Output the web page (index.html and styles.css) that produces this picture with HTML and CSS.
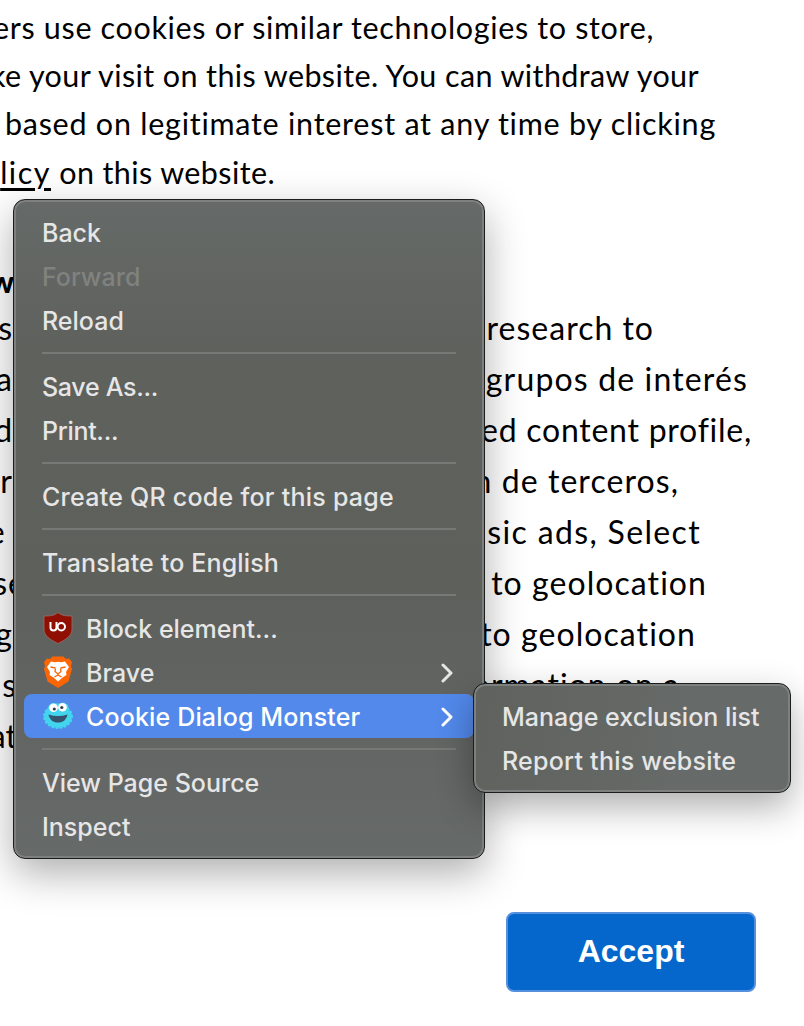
FILE: index.html
```
<!DOCTYPE html>
<html lang="en">
<head>
<meta charset="utf-8">
<title>Cookie dialog</title>
<link rel="stylesheet" href="styles.css">
</head>
<body>
<main class="page">
  <div class="intro">
    <p class="line l1">ers use cookies or similar technologies to store,</p>
    <p class="line l2">ke your visit on this website. You can withdraw your</p>
    <p class="line l3">based on legitimate interest at any time by clicking</p>
    <p class="line l4"><a class="policy">licy</a> on this website.</p>
  </div>
  <div class="purposes">
    <h2 class="heading">w</h2>
    <div class="row r1"><span class="start">s</span><span class="end">research to</span></div>
    <div class="row r2"><span class="start">a</span><span class="end">grupos de interés</span></div>
    <div class="row r3"><span class="start">d</span><span class="end">ed content profile,</span></div>
    <div class="row r4"><span class="start">r</span><span class="end">n de terceros,</span></div>
    <div class="row r5"><span class="start">e</span><span class="end">asic ads, Select</span></div>
    <div class="row r6"><span class="start">se</span><span class="end">to geolocation</span></div>
    <div class="row r7"><span class="start">g</span><span class="end">to geolocation</span></div>
    <div class="row r8"><span class="start">s</span><span class="end">ormation on a</span></div>
    <div class="row r9"><span class="start">at</span></div>
  </div>
  <button class="accept">Accept</button>
</main>

<nav class="menu main-menu">
  <div class="item">Back</div>
  <div class="item disabled">Forward</div>
  <div class="item">Reload</div>
  <div class="sep"></div>
  <div class="item tight">Save As...</div>
  <div class="item tight">Print...</div>
  <div class="sep"></div>
  <div class="item loose">Create QR code for this page</div>
  <div class="sep"></div>
  <div class="item wide">Translate to English</div>
  <div class="sep"></div>
  <div class="item">
    <svg class="icon" viewBox="0 0 32 32">
      <path d="M16 .5C20 4 25 4 30 4v13c0 7-6 10.500-14 14.500C8 27.500 2 24 2 17V4c5 0 10 0 14-3.500z" fill="#8f1003" stroke="#99706b" stroke-width=".8"/>
      <path d="M8.500 10v5.500a3 3 0 0 0 6 0V10v5.500" fill="none" stroke="#fff" stroke-width="2"/>
      <circle cx="19.300" cy="14.800" r="3.700" fill="none" stroke="#fff" stroke-width="2"/>
    </svg>Block element...</div>
  <div class="item">
    <svg class="icon" viewBox="0 0 32 32">
      <path d="M10.500.5h11L24 3l3-.5L30 6l-1 4 1 3-3.500 12.500L16 32 5.500 25.500 2 13l1-3-1-4 3-3.500 3 .5z" fill="#fb6505"/>
      <path d="M9 5.500l4 .8 3-.5 3 .5 4-.8 4 5.500-3 5 .5 3-4 2.500-4.500 4-4.500-4-4-2.500.5-3-3-5z" fill="#fff"/>
      <path d="M8.500 11l5 1M23.500 11l-5 1M13.500 12.500l-.5 3 3 2.500 3-2.500-.5-3M12.500 21l3.500-2 3.500 2" fill="none" stroke="#fb6505" stroke-width="1.300"/>
    </svg>Brave<svg class="chevron" viewBox="0 0 12 20"><path d="M2 2l8 8-8 8"/></svg></div>
  <div class="item active wide">
    <svg class="icon" viewBox="0 0 32 32">
      <ellipse cx="16" cy="16.500" rx="13.500" ry="11" fill="#42d5ee"/>
      <ellipse cx="16" cy="16.500" rx="13.500" ry="11" fill="none" stroke="#42d5ee" stroke-width="3" stroke-linecap="round" stroke-dasharray=".5 3.500"/>
      <path d="M5 10l2-5 3-2 6 .5 6-1 4 2.500 1 6z" fill="#42d5ee"/>
      <circle cx="11.500" cy="7.800" r="4.300" fill="#fff"/><circle cx="20.500" cy="7.300" r="4.300" fill="#fff"/>
      <circle cx="12.300" cy="9" r="1.600" fill="#34404b"/><circle cx="19.800" cy="7.500" r="1.600" fill="#34404b"/>
      <path d="M6.500 14.500q9.500 3 19 0l-.5 2C23 21 20 22.500 16 22.500S9 21 7 16.500z" fill="#35536c"/>
    </svg>Cookie Dialog Monster<svg class="chevron" viewBox="0 0 12 20"><path d="M2 2l8 8-8 8"/></svg></div>
  <div class="sep"></div>
  <div class="item">View Page Source</div>
  <div class="item">Inspect</div>
</nav>

<nav class="menu sub-menu">
  <div class="item">Manage exclusion list</div>
  <div class="item loose">Report this website</div>
</nav>
</body>
</html>
```

FILE: styles.css
```
* { box-sizing: border-box; }
body { margin: 0; background: #fff; }
.page {
  position: relative;
  width: 804px;
  height: 1026px;
  overflow: hidden;
  display: flex;
  flex-direction: column;
  color: #000;
  font-family: Lato, sans-serif;
}
p, h2 { margin: 0; }
.intro { padding-top: 3px; font-size: 30.500px; }
.line {
  height: 48.200px;
  line-height: 48.200px;
  display: flex;
  justify-content: flex-end;
  white-space: pre;
}
.l1 { padding-right: 150px; letter-spacing: .66px; }
.l2 { padding-right: 105px; letter-spacing: .4px; }
.l3 { padding-right: 88px; letter-spacing: .75px; }
.l4 { padding-right: 529px; letter-spacing: .4px; }
.policy { letter-spacing: 1.500px; text-decoration: underline; text-decoration-thickness: 3px; text-underline-offset: 4px; }
.purposes { padding-top: 61px; font-size: 32px; }
.heading { width: 14px; height: 45px; line-height: 48px; font-size: 30px; font-weight: 900; display: flex; justify-content: flex-end; }
.row { height: 51px; line-height: 51px; display: flex; justify-content: space-between; white-space: nowrap; }
.start { width: 13px; display: flex; justify-content: flex-end; }
.r5 .start { width: 6px; }
.r6 .start { width: 26px; }
.r8 .start { width: 17px; }
.r9 .start { width: 17px; }
.r1 { padding-right: 150px; letter-spacing: 1px; }
.r2 { padding-right: 56px; letter-spacing: 1.150px; }
.r3 { padding-right: 52px; letter-spacing: .75px; }
.r4 { padding-right: 125px; letter-spacing: 1.070px; }
.r5 { padding-right: 103px; letter-spacing: 1.350px; }
.r6 { padding-right: 97px; letter-spacing: 1.060px; }
.r7 { padding-right: 108px; letter-spacing: 1.060px; }
.r8 { padding-right: 124px; letter-spacing: 1px; }
.accept {
  margin: 151px 48px 0 auto;
  width: 250px;
  height: 80px;
  flex: none;
  padding: 0;
  border: 2px solid #5590de;
  border-radius: 8px;
  background: #0566cb;
  color: #fff;
  font: bold 32px "Liberation Sans", sans-serif;
}
.menu {
  position: absolute;
  padding: 10px;
  border: 1px solid #1c1d1d;
  border-radius: 12px;
  color: #e6e6e6;
  font: 500 25px Inter, sans-serif;
}
.main-menu {
  left: 13px;
  top: 199px;
  width: 472px;
  background: linear-gradient(#656a68 0, #5f615d 22%, #5e605c 60%, #616461 76%, #666a69 100%);
  box-shadow: inset 0 0 0 2px #7e807f, 0 14px 40px rgba(0,0,0,.32);
}
.sub-menu {
  left: 473px;
  top: 683px;
  width: 318px;
  background: linear-gradient(100deg, #5f625d, #666a68 65%);
  box-shadow: inset 0 0 0 2px #7e807f, 0 14px 36px rgba(0,0,0,.32);
}
.item { height: 44px; padding: 2px 18px 0; display: flex; align-items: center; border-radius: 8px; white-space: pre; line-height: 42px; }
.tight { letter-spacing: -.3px; }
.wide { letter-spacing: .15px; }
.loose { letter-spacing: .25px; }
.disabled { color: #80827f; }
.active { background: #5289eb; color: #fff; }
.sep { height: 22px; padding: 10px 18px; }
.sep::before { content: ""; display: block; height: 2px; background: #777976; }
.icon { width: 32px; height: 32px; margin-right: 12px; flex: none; margin-top: -2px; }
.chevron { width: 12px; height: 20px; margin-left: auto; margin-right: 3px; fill: none; stroke: currentColor; stroke-width: 3; stroke-linecap: round; stroke-linejoin: round; }
```
